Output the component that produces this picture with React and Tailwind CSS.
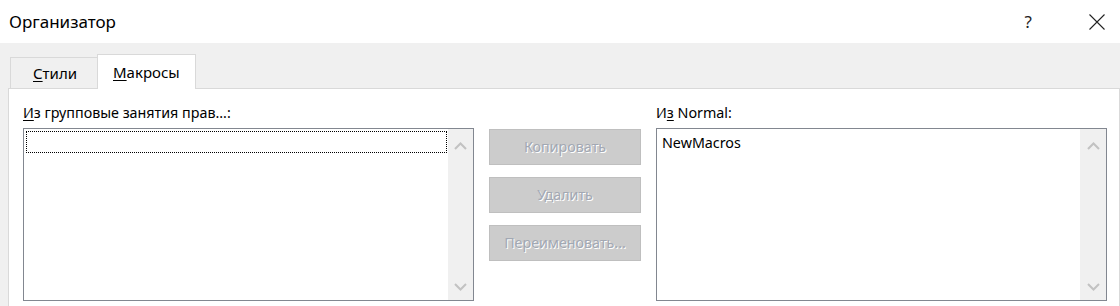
import React from "react";

const font = { fontFamily: '"Noto Sans", "Open Sans", sans-serif' };

const ChevronUp = () => (
  <svg width="13" height="8" viewBox="0 0 13 8" className="block">
    <path d="M1 7 L6.5 1.5 L12 7" fill="none" stroke="#c2c2c2" strokeWidth="2" />
  </svg>
);

const ChevronDown = () => (
  <svg width="13" height="8" viewBox="0 0 13 8" className="block">
    <path d="M1 1 L6.5 6.5 L12 1" fill="none" stroke="#c2c2c2" strokeWidth="2" />
  </svg>
);

const ListBox = ({ children }) => (
  <div className="flex h-[173px] w-[451px] border border-[#828790] bg-white">
    <div className="flex-1 p-px">{children}</div>
    <div className="flex w-[26px] flex-col items-center justify-between bg-[#f0f0f0] pt-[13px] pb-[9px]">
      <ChevronUp />
      <ChevronDown />
    </div>
  </div>
);

const DisabledButton = ({ label }) => (
  <div className="flex h-[36px] w-[152px] items-center justify-center border border-[#bfbfbf] bg-[#cccccc] text-[14.3px] text-[#a2a8b3] [text-shadow:1px_1px_0_#ffffff]">
    {label}
  </div>
);

export default function App() {
  return (
    <div className="flex h-[306px] w-[1120px] flex-col overflow-hidden bg-white text-black" style={font}>
      {/* Title bar */}
      <div className="flex h-[43px] shrink-0 items-center justify-between pl-[9px]">
        <span className="text-[17px] leading-none">Организатор</span>
        <div className="flex items-center">
          <span className="mr-[57px] text-[17px] leading-none text-[#222]">?</span>
          <svg width="16" height="16" viewBox="0 0 16 16" className="mr-[15px]">
            <path d="M0.5 0.5 L15.5 15.5 M15.5 0.5 L0.5 15.5" stroke="#222" strokeWidth="1.1" />
          </svg>
        </div>
      </div>

      {/* Dialog body */}
      <div className="flex shrink-0 flex-col bg-[#f0f0f0] pl-[8px] pt-[11px]">
        {/* Tabs */}
        <div className="relative z-10 -mb-px flex items-end pl-[2px]">
          <div className="flex h-[32px] w-[87px] items-center border-t border-l border-[#d9d9d9] pl-[22px] text-[15px]">
            <span><span className="underline underline-offset-2">С</span>тили</span>
          </div>
          <div className="flex h-[35px] w-[99px] items-center border border-b-0 border-[#d9d9d9] bg-white pl-[15px] text-[15px]">
            <span><span className="underline underline-offset-2">М</span>акросы</span>
          </div>
        </div>

        {/* Panel */}
        <div className="h-[240px] border border-[#d9d9d9] bg-white pl-[14px] pt-[13px]">
          <div className="flex items-start">
            <div className="flex flex-col">
              <div className="mb-[5px] h-[21px] text-[14.3px] leading-[21px]">
                <span className="underline underline-offset-2">И</span>з групповые занятия прав...:
              </div>
              <ListBox>
                <div className="mt-px ml-px h-[22px] w-[421px] border border-dotted border-black" />
              </ListBox>
            </div>

            <div className="ml-[15px] mt-[27px] flex flex-col gap-[12px]">
              <DisabledButton label="Копировать" />
              <DisabledButton label="Удалить" />
              <DisabledButton label="Переименовать..." />
            </div>

            <div className="ml-[15px] flex flex-col">
              <div className="mb-[5px] h-[21px] text-[14.3px] leading-[21px]">
                И<span className="underline underline-offset-2">з</span> Normal:
              </div>
              <ListBox>
                <div className="pl-[4px] pt-[3px] text-[14.3px] leading-[20px]">NewMacros</div>
              </ListBox>
            </div>
          </div>
        </div>
      </div>
    </div>
  );
}
